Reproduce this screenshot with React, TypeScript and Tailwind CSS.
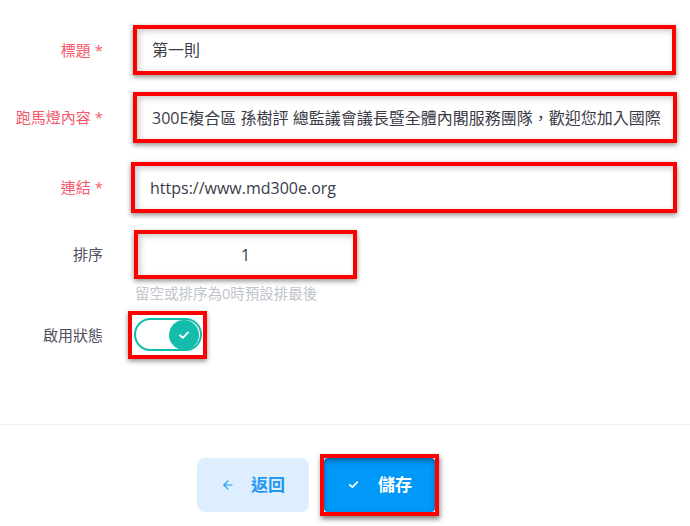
import React from 'react'
import { ArrowLeft } from 'lucide-react'

type FieldProps = {
  label: string
  required?: boolean
  children: React.ReactNode
  className?: string
}

const Field = ({ label, required, children, className }: FieldProps) => {
  return (
    <div className={`flex items-center ${className ?? ''}`}>
      <label className={`w-[103px] shrink-0 text-right text-[15px] ${required ? 'text-[#f5586c]' : 'text-[#50505e]'}`}>
        {label}
        {required && <span className="ml-1">*</span>}
      </label>
      {children}
    </div>
  )
}

const Marked = ({ className, children }: { className?: string; children: React.ReactNode }) => (
  <div className={`border-4 border-[#ff0000] bg-white shadow-[0_2px_5px_rgba(0,0,0,0.45)] ${className ?? ''}`}>
    <div className="h-full w-full shadow-[inset_2px_2px_6px_rgba(0,0,0,0.22)]">{children}</div>
  </div>
)

const TextBox = ({ value, className }: { value: string; className?: string }) => (
  <Marked className={className}>
    <div className="h-full overflow-hidden pl-[15px] pr-[12px]">
      <div className="flex h-full items-center whitespace-nowrap text-[16px] text-[#3b3b48]">{value}</div>
    </div>
  </Marked>
)

const Check = ({ className }: { className?: string }) => (
  <svg viewBox="0 0 24 24" className={className} fill="none" stroke="currentColor" strokeWidth={3.2} strokeLinecap="round" strokeLinejoin="round">
    <polyline points="5 12.5 10 17 19 7.5" />
  </svg>
)

const App = () => {
  return (
    <div className="h-[526px] w-[690px] overflow-hidden bg-white font-['Open_Sans','Noto_Sans_CJK_TC',sans-serif]">
      <div className="flex flex-col pt-[25px]">
        <Field label="標題" required>
          <TextBox value="第一則" className="ml-[30px] h-[50px] w-[543px]" />
        </Field>
        <Field label="跑馬燈內容" required className="mt-[17px]">
          <TextBox
            value="300E複合區 孫樹評 總監議會議長暨全體內閣服務團隊，歡迎您加入國際"
            className="ml-[30px] h-[51px] w-[544px]"
          />
        </Field>
        <Field label="連結" required className="mt-[19px]">
          <TextBox value="https://www.md300e.org" className="ml-[28px] h-[51px] w-[546px]" />
        </Field>
        <Field label="排序" className="mt-[17px]">
          <Marked className="ml-[31px] h-[49px] w-[223px]">
            <div className="flex h-full items-center justify-center text-[16px] text-[#3b3b48]">1</div>
          </Marked>
        </Field>
        <p className="ml-[135px] mt-[4px] text-[14.5px] text-[#c0c4cc]">留空或排序為0時預設排最後</p>
        <Field label="啟用狀態" className="mt-[6px]">
          <div className="ml-[25px] flex h-[48px] w-[79px] items-center justify-center border-4 border-[#ff0000] shadow-[0_2px_5px_rgba(0,0,0,0.45)]">
            <div className="flex h-[33px] w-[68px] items-center justify-end rounded-full border-2 border-[#13bcab] bg-white pr-[1px]">
              <div className="flex h-[30px] w-[30px] items-center justify-center rounded-full bg-[#13bcab] text-white">
                <Check className="h-[14px] w-[14px]" />
              </div>
            </div>
          </div>
        </Field>
      </div>

      <div className="mt-[65px] h-px w-full bg-[#ebeef5]" />

      <div className="ml-[197px] mt-[29px] flex items-center gap-[11px]">
        <button className="flex h-[54px] w-[112px] items-center justify-center gap-[16px] rounded-lg bg-[#ddeffe] text-[17px] font-bold text-[#2196f3]">
          <ArrowLeft size={14} strokeWidth={2} />
          <span>返回</span>
        </button>
        <div className="border-4 border-[#ff0000] shadow-[1px_3px_5px_rgba(0,0,0,0.5)]">
          <button className="flex h-[54px] w-[111px] items-center justify-center gap-[18px] rounded-sm bg-[#0099f7] text-[17px] font-bold text-white shadow-[inset_0_3px_5px_rgba(0,0,0,0.35)]">
            <Check className="h-[13px] w-[13px]" />
            <span>儲存</span>
          </button>
        </div>
      </div>
    </div>
  )
}

export default App
